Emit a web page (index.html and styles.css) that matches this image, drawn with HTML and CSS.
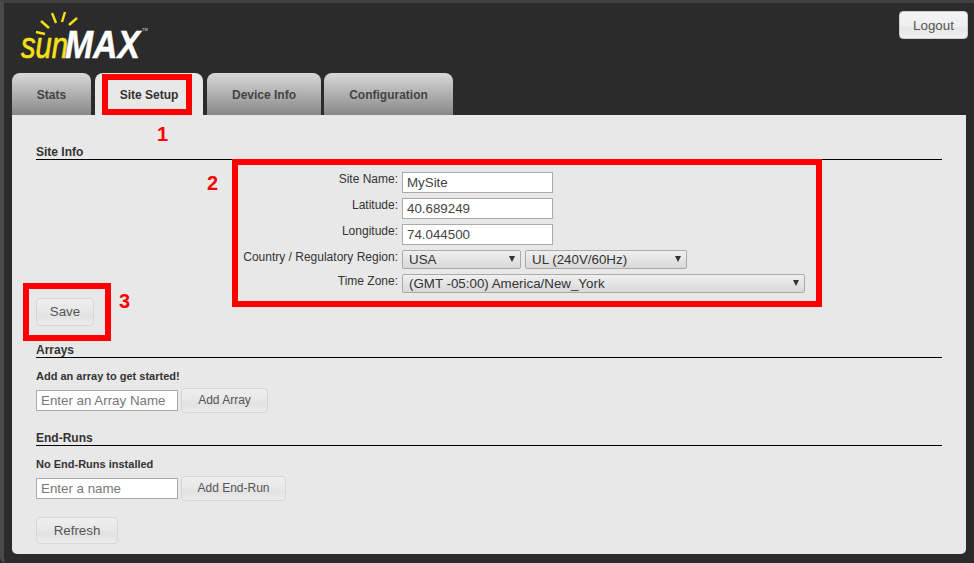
FILE: index.html
```html
<!DOCTYPE html>
<html lang="en">
<head>
<meta charset="utf-8">
<title>sunMAX - Site Setup</title>
<link rel="stylesheet" href="styles.css">
</head>
<body>
<div class="frame">
  <header class="top">
    <svg class="logo" width="136" height="58" viewBox="0 0 136 58" aria-label="sunMAX logo">
      <g stroke="#f7e017" stroke-width="2.4" fill="none">
        <line x1="22" y1="23" x2="31" y2="25"/>
        <line x1="27" y1="12" x2="35" y2="19"/>
        <line x1="38" y1="4" x2="42" y2="14"/>
        <line x1="51" y1="3" x2="48" y2="13"/>
        <line x1="63" y1="9" x2="55" y2="16"/>
      </g>
      <text class="logo-sun" x="7" y="49" textLength="47" lengthAdjust="spacingAndGlyphs">sun</text>
      <text class="logo-max" x="51" y="49" textLength="75" lengthAdjust="spacingAndGlyphs">MAX</text>
      <text class="logo-tm" x="128" y="22">TM</text>
    </svg>
    <button class="btn logout" type="button">Logout</button>
  </header>
  <nav class="tabs">
    <a class="tab tab-stats">Stats</a>
    <a class="tab tab-active tab-site">Site Setup</a>
    <a class="tab tab-device">Device Info</a>
    <a class="tab tab-config">Configuration</a>
  </nav>
  <main class="panel">
    <h2 class="section-title">Site Info</h2>
    <div class="site-form">
      <label class="field-label">Site Name:</label>
      <input class="text-input wide" type="text" value="MySite">
      <label class="field-label">Latitude:</label>
      <input class="text-input wide" type="text" value="40.689249">
      <label class="field-label">Longitude:</label>
      <input class="text-input wide" type="text" value="74.044500">
      <label class="field-label">Country / Regulatory Region:</label>
      <div class="select-row">
        <span class="select-wrap w-country"><select class="select"><option>USA</option></select></span>
        <span class="select-wrap w-region"><select class="select"><option>UL (240V/60Hz)</option></select></span>
      </div>
      <label class="field-label tz-label">Time Zone:</label>
      <div class="select-row">
        <span class="select-wrap w-tz"><select class="select"><option>(GMT -05:00) America/New_York</option></select></span>
      </div>
    </div>
    <button class="btn save" type="button">Save</button>

    <h2 class="section-title arrays-title">Arrays</h2>
    <p class="note">Add an array to get started!</p>
    <div class="add-row">
      <input class="text-input name" type="text" placeholder="Enter an Array Name">
      <button class="btn add add-array" type="button">Add Array</button>
    </div>

    <h2 class="section-title ends-title">End-Runs</h2>
    <p class="note">No End-Runs installed</p>
    <div class="add-row">
      <input class="text-input name" type="text" placeholder="Enter a name">
      <button class="btn add add-end" type="button">Add End-Run</button>
    </div>
    <button class="btn refresh" type="button">Refresh</button>
  </main>

  <div class="mark mark-1"></div>
  <div class="mark mark-2"></div>
  <div class="mark mark-3"></div>
  <span class="num num-1">1</span>
  <span class="num num-2">2</span>
  <span class="num num-3">3</span>
</div>
</body>
</html>
```
FILE: styles.css
```css
* { box-sizing: border-box; }
html, body { margin: 0; padding: 0; }
body {
  width: 974px;
  height: 563px;
  overflow: hidden;
  background: #2b2b2b;
  font-family: "Liberation Sans", Arial, sans-serif;
  color: #333;
}
.frame {
  position: relative;
  width: 974px;
  height: 563px;
  background: #2b2b2b;
  border-top: 3px solid #414141;
  border-left: 4px solid #4a4a4a;
  border-bottom-left-radius: 6px;
  padding: 0 8px 9px 8px;
  display: flex;
  flex-direction: column;
}
.top {
  height: 70px;
  display: flex;
  justify-content: space-between;
  align-items: flex-start;
}
.logo { display: block; margin: 6px 0 0 2px; }
.logo-sun { font: italic 400 37px "Liberation Sans", sans-serif; fill: #f7e017; stroke: #f7e017; stroke-width: 0.7px; }
.logo-max { font: italic 700 39px "Liberation Sans", sans-serif; fill: #fff; stroke: #fff; stroke-width: 0.5px; }
.logo-tm { font: 700 4px "Liberation Sans", sans-serif; fill: #aaa; }
.btn {
  display: block;
  font: 13.33px "Liberation Sans", sans-serif;
  color: #555;
  border: 1px solid #d6d6d6;
  border-radius: 4px;
  background: linear-gradient(#efefef 0%, #e6e6e6 55%, #e2e2e2 60%, #ececec 100%);
  padding: 0;
}
.logout {
  width: 69px;
  height: 28px;
  margin: 8px -2px 0 0;
  border-color: #ccc;
  background: linear-gradient(#f4f4f4 0%, #eeeeee 55%, #e6e6e6 60%, #f0f0f0 100%);
}
.tabs { display: flex; height: 42px; }
.tab {
  display: flex;
  align-items: center;
  justify-content: center;
  height: 42px;
  padding-top: 2px;
  margin-right: 4px;
  border-radius: 8px 8px 0 0;
  font-size: 12px;
  font-weight: 700;
  color: #444;
  background: linear-gradient(#d8d8d8 0%, #888888 100%);
}
.tab-stats { width: 79px; }
.tab-site { width: 108px; }
.tab-device { width: 114px; margin-right: 3px; }
.tab-config { width: 129px; }
.tab-active { background: #e8e8e8; color: #333; }
.panel {
  flex: 1;
  background: #e8e8e8;
  border-radius: 0 0 5px 5px;
  padding: 30px 24px 0 24px;
}
.section-title {
  margin: 0;
  height: 15px;
  font-size: 12px;
  line-height: 14px;
  font-weight: 700;
  color: #333;
  border-bottom: 1px solid #000;
}
.site-form {
  display: grid;
  grid-template-columns: 362px 1fr;
  column-gap: 4px;
  grid-auto-rows: 26px;
  margin-top: 12px;
}
.field-label {
  text-align: right;
  font-size: 12px;
  line-height: 14px;
  color: #333;
}
.tz-label { margin-top: -2px; }
.text-input {
  display: block;
  height: 21px;
  border: 1px solid #aaa;
  background: #fff;
  padding: 0 4px;
  font: 13.33px "Liberation Sans", sans-serif;
  color: #444;
  border-radius: 0;
  outline: 0;
}
.text-input::placeholder { color: #777; opacity: 1; }
.wide { width: 151px; }
.name { width: 142px; }
.select-row { display: flex; gap: 4px; }
.tz-label + .select-row { margin-top: -2px; }
.select-wrap { position: relative; display: block; height: 19px; }
.select-wrap::after {
  content: "";
  position: absolute;
  right: 6px;
  top: 6px;
  border-left: 3px solid transparent;
  border-right: 3px solid transparent;
  border-top: 6px solid #333;
  pointer-events: none;
}
.w-country { width: 119px; }
.w-region { width: 162px; }
.w-tz { width: 403px; }
.select {
  appearance: none;
  display: block;
  width: 100%;
  height: 19px;
  margin: 0;
  border: 1px solid #aaa;
  border-radius: 2px;
  padding: 0 0 0 6px;
  font: 13.33px "Liberation Sans", sans-serif;
  color: #333;
  background: linear-gradient(#f0f0f0, #d8d8d8);
}
.save { width: 58px; height: 28px; margin-top: -4px; padding-bottom: 2px; }
.arrays-title { margin-top: 17px; }
.ends-title { margin-top: 18px; }
.note {
  margin: 12px 0 0 0;
  height: 13px;
  font-size: 11px;
  line-height: 13px;
  font-weight: 700;
  color: #333;
}
.add-row { display: flex; align-items: center; gap: 3px; margin-top: 5px; height: 25px; }
.add { height: 25px; font-size: 12px; padding-bottom: 2px; }
.add-array { width: 87px; }
.add-end { width: 105px; }
.refresh { width: 82px; height: 27px; margin-top: 16px; }
.mark { position: absolute; border: 6px solid #f00; }
.mark-1 { left: 98px; top: 71px; width: 90px; height: 41px; }
.mark-2 { left: 228px; top: 156px; width: 590px; height: 148px; }
.mark-3 { left: 19px; top: 280px; width: 88px; height: 58px; }
.num {
  position: absolute;
  font-size: 20px;
  font-weight: 700;
  line-height: 24px;
  color: #f00;
}
.num-1 { left: 153px; top: 119px; }
.num-2 { left: 203px; top: 168px; }
.num-3 { left: 115px; top: 286px; }
```
